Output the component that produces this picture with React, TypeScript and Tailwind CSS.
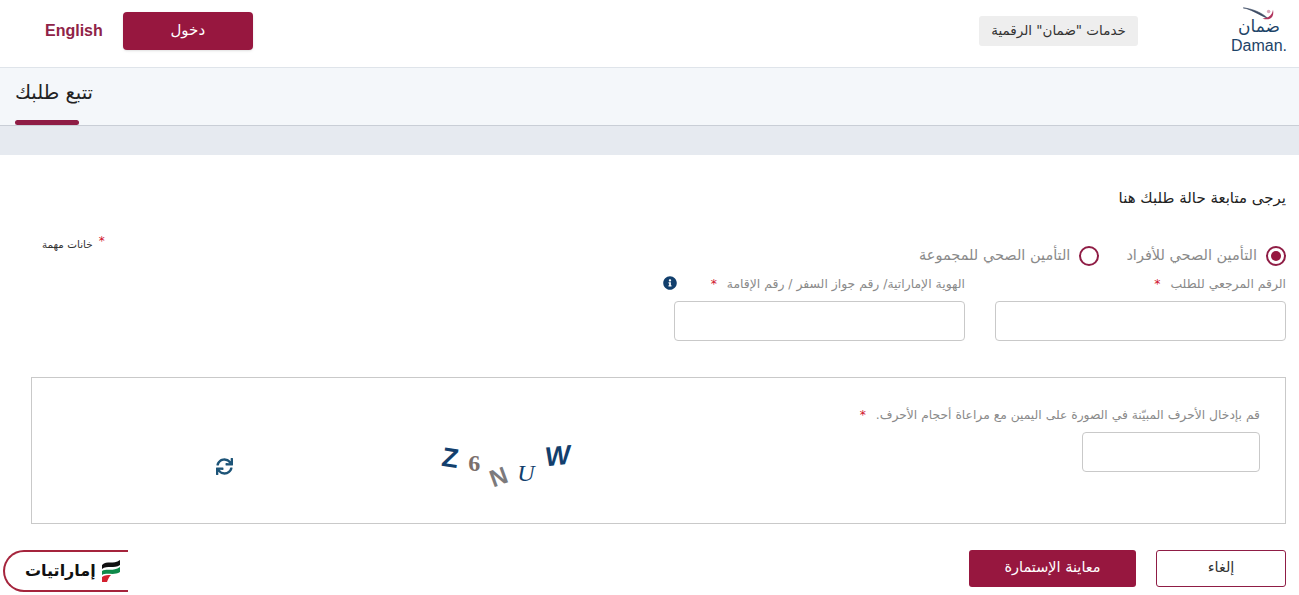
import { FaInfoCircle, FaSync } from "react-icons/fa";

function Star() {
  return <span className="text-[#d0112b] mr-1.5">*</span>;
}

function Radio({ checked, label }: { checked?: boolean; label: string }) {
  return (
    <label className="flex items-center gap-[9px]">
      <span className="flex h-5 w-5 items-center justify-center rounded-full border-2 border-[#8f1d45]">
        {checked && <span className="h-2.5 w-2.5 rounded-full bg-[#97173f]" />}
      </span>
      <span className="text-[14.5px] text-[#8a8a8a]">{label}</span>
    </label>
  );
}

function DamanLogo() {
  return (
    <div className="flex w-[56px] flex-col items-center" dir="ltr">
      <svg className="-mb-[5px]" width="40" height="14" viewBox="0 0 40 16">
        <path d="M2 1C10 2 20 9 30 13C24 7 13 2 2 1Z" fill="#3b4a63" stroke="#3b4a63" strokeWidth="0.7" />
        <path d="M24 13C31 16 38 13 36 3C35 9 31 13 24 13Z" fill="#b0345d" />
        <circle cx="31" cy="5" r="2" fill="#d8a5b8" />
      </svg>
      <span className="text-[17px] leading-[21px] text-[#1d4468] font-['DejaVu_Sans',sans-serif]">ضمان</span>
      <span className="text-[16px] leading-[18px] text-[#1d4468] font-['Liberation_Sans',sans-serif]">Daman.</span>
    </div>
  );
}

function CaptchaImage() {
  return (
    <div className="mr-[270px] mt-[64px] flex h-[48px] w-[128px] items-start justify-between" dir="ltr">
      <span className="mt-[-4px] rotate-[8deg] font-['Liberation_Sans',sans-serif] text-[27px] font-bold leading-8 text-[#123f6d]">Z</span>
      <span className="mt-[3px] font-['Liberation_Serif',serif] text-[24px] font-bold leading-7 text-[#7b6f6c]">6</span>
      <span className="mt-[17px] -rotate-[20deg] font-['Liberation_Sans',sans-serif] text-[24px] font-bold leading-7 text-[#7c7a7c]">N</span>
      <span className="mt-[13px] font-['Liberation_Serif',serif] text-[24px] italic leading-7 text-[#123f6d]">U</span>
      <span className="mt-[-6px] rotate-[-6deg] font-['Liberation_Sans',sans-serif] text-[27px] font-bold italic leading-8 text-[#123f6d]">W</span>
    </div>
  );
}

function EmaratiyatBadge() {
  return (
    <div dir="ltr" className="absolute bottom-[3px] left-[3px] flex h-[42px] w-[125px] items-center gap-[5px] rounded-l-[22px] border-y-2 border-l-2 border-[#a5243c] bg-white pl-[20px]">
      <span className="text-[16px] font-bold text-[#111]">إماراتيات</span>
      <svg width="20" height="22" viewBox="0 0 20 22">
        <path d="M1 5C6 0 12 5 19 0V5C13 9 6 5 1 9Z" fill="#111" />
        <path d="M1 11C6 8 12 12 19 7V12C13 16 6 12 1 15Z" fill="#0f8a4a" />
        <path d="M1 17C4 15 7 15 10 15C8 17 7 19 6 22H1Z" fill="#d3202f" />
      </svg>
    </div>
  );
}

export default function App() {
  return (
    <div dir="rtl" className="relative h-[595px] w-[1299px] overflow-hidden bg-white font-['DejaVu_Sans',sans-serif]">
      <header className="flex h-[68px] items-center justify-between border-b border-[#dfe4ea] pb-[6px] pl-[45px] pr-[12px]">
        <div className="flex items-center gap-[93px]">
          <DamanLogo />
          <span className="flex h-[30px] w-[159px] items-center justify-center rounded-[3px] bg-[#eeeeee] text-[13.5px] text-[#333]">
            خدمات "ضمان" الرقمية
          </span>
        </div>
        <div className="flex items-center gap-[20px]">
          <button className="h-[38px] w-[130px] rounded-[4px] bg-[#97173f] text-[15px] text-white shadow-sm">دخول</button>
          <a className="font-['Liberation_Sans',sans-serif] text-[16px] font-bold text-[#8f2347]">English</a>
        </div>
      </header>

      <div className="flex h-[58px] justify-end border-b border-[#c9ced6] bg-[#f4f7fa] pl-[15px]">
        <div className="relative w-[78px]">
          <h1 className="mt-[11px] whitespace-nowrap text-[19.5px] leading-7 text-[#222]">تتبع طلبك</h1>
          <span className="absolute bottom-0 left-0 h-[5px] w-[64px] rounded-sm bg-[#8f1d45]" />
        </div>
      </div>
      <div className="h-[29px] bg-[#e6eaf0]" />

      <main className="pl-[31px] pr-[13px]">
        <p className="mt-[33px] text-[15px] leading-5 text-[#222]">يرجى متابعة حالة طلبك هنا</p>

        <div className="mt-[37px] flex items-start justify-between">
          <div className="flex gap-[27px]">
            <Radio checked label="التأمين الصحي للأفراد" />
            <Radio label="التأمين الصحي للمجموعة" />
          </div>
          <span className="ml-[11px] mt-[-15px] flex items-start whitespace-nowrap text-[10.4px] leading-4 text-[#333]">
            <span className="mt-[6px]">خانات مهمة</span>
            <span className="order-first ml-1.5 mt-[3px] text-[12px] text-[#d0112b]">*</span>
          </span>
        </div>

        <div className="mt-[7px] flex gap-[30px]">
          <div className="w-[291px]">
            <label className="block h-[27px] text-[12.4px] leading-5 text-[#8a8a8a]">
              الرقم المرجعي للطلب <Star />
            </label>
            <input className="h-[40px] w-full rounded-[4px] border border-[#c9c9c9] bg-white" />
          </div>
          <div className="relative w-[291px]">
            <label className="block h-[27px] text-[12.4px] leading-5 text-[#8a8a8a]">
              الهوية الإماراتية/ رقم جواز السفر / رقم الإقامة <Star />
            </label>
            <FaInfoCircle className="absolute left-[-11px] top-[2px] text-[14px] text-[#123f6d]" />
            <input className="h-[40px] w-full rounded-[4px] border border-[#c9c9c9] bg-white" />
          </div>
        </div>

        <section className="mt-[36px] flex h-[147px] items-center border border-[#c9c9c9] pb-[24px] pr-[25px]">
          <div className="w-[420px]">
            <label className="block h-[27px] whitespace-nowrap text-[12.3px] leading-5 text-[#8a8a8a]">
              قم بإدخال الأحرف المبيّنة في الصورة على اليمين مع مراعاة أحجام الأحرف. <Star />
            </label>
            <input className="h-[40px] w-[178px] rounded-[4px] border border-[#c9c9c9] bg-white" />
          </div>
          <CaptchaImage />
          <FaSync className="mr-[209px] mt-[56px] text-[17px] text-[#1d5478]" />
        </section>

        <div className="mt-[26px] flex gap-[20px]">
          <button className="h-[37px] w-[130px] rounded-[3px] border border-[#8f1d45] bg-white text-[14.5px] text-[#333]">إلغاء</button>
          <button className="h-[37px] w-[167px] rounded-[3px] bg-[#97173f] text-[14.5px] text-white">معاينة الإستمارة</button>
        </div>
      </main>

      <EmaratiyatBadge />
    </div>
  );
}
